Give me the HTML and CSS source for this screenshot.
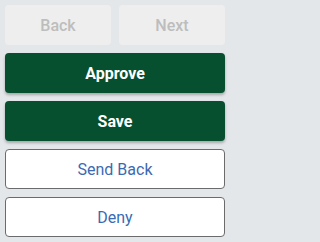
FILE: index.html
```html
<!DOCTYPE html>
<html>
<head>
<meta charset="utf-8">
<link rel="stylesheet" href="styles.css">
</head>
<body>
<div class="panel">
  <div class="row">
    <button class="btn btn-disabled">Back</button>
    <button class="btn btn-disabled">Next</button>
  </div>
  <button class="btn btn-primary">Approve</button>
  <button class="btn btn-primary">Save</button>
  <button class="btn btn-outline">Send Back</button>
  <button class="btn btn-outline">Deny</button>
</div>
</body>
</html>
```
FILE: styles.css
```css
html, body {
  margin: 0;
  padding: 0;
  background: #e4e7ea;
}
.panel {
  display: flex;
  flex-direction: column;
  gap: 8px;
  padding: 5px;
  width: 220px;
}
.row {
  display: grid;
  grid-template-columns: 1fr 1fr;
  gap: 8px;
}
.btn {
  height: 40px;
  border-radius: 4px;
  font-family: Roboto, "Liberation Sans", sans-serif;
  font-size: 16px;
  margin: 0;
  padding: 0;
  box-sizing: border-box;
  width: 100%;
}
.btn-disabled {
  background: #eeeeee;
  border: none;
  color: #bdbdbd;
  font-weight: 500;
}
.btn-primary {
  background: #065030;
  border: none;
  color: #ffffff;
  font-weight: 700;
  box-shadow: 0 2px 3px rgba(0,0,0,0.28);
}
.btn-outline {
  background: #ffffff;
  border: 1px solid #6b6b6b;
  color: #3b6ab3;
  font-weight: 400;
}
```
